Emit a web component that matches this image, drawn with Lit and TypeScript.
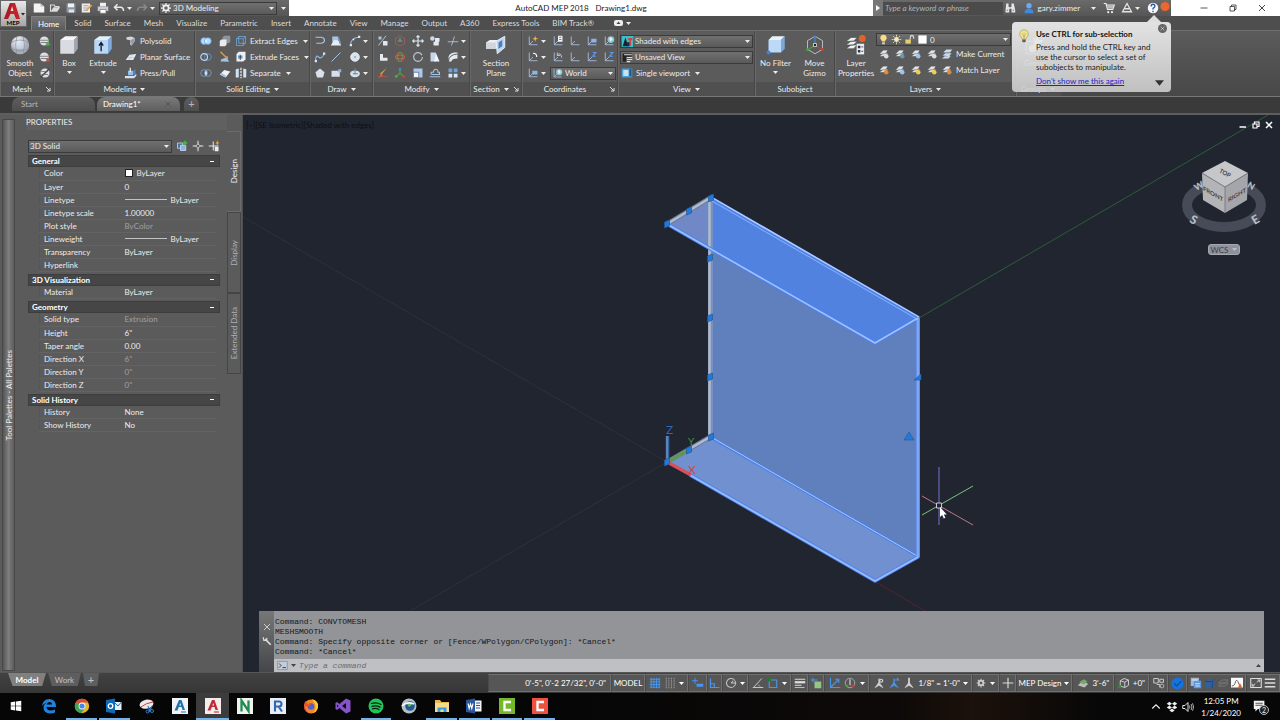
import { LitElement, html, svg, css, nothing } from "lit";
import { customElement, property } from "lit/decorators.js";
import { classMap } from "lit/directives/class-map.js";

const W = "#e8eaee";
const B = "#8fc0ee";
const axes = svg`<path d="M3 2v11h11M3 13l5-5" fill="none" stroke="#9fb6d6" stroke-width="1.3"/>`;
const sheets = (c: string) => svg`<path d="M2 8l5-5h6l-3 5zM2 11l5-4h6l-3 4z" fill="${W}" stroke="#555" stroke-width=".5"/><circle cx="11" cy="11" r="3" fill="${c}"/>`;

/* Glyphs are drawn on a 16 by 16 grid. */
const glyphs: Record<string, unknown> = {
  new: svg`<path d="M1 2h9l5 4v8H1z" fill="#f4f4f4"/><path d="M10 2v4h5" fill="#bbb"/>`,
  open: svg`<path d="M2 13V4h5l1 2h5v2" fill="none" stroke="#ddd" stroke-width="1.5"/><path d="M2 13l4-6h9l-4 6z" fill="#d9dbe0"/>`,
  save: svg`<path d="M2 2h12v12H2z" fill="#8b96a8"/><path d="M4 2h8v5H4z" fill="#f2f2f2"/><path d="M5 10h7v4H5z" fill="#e4e4e4"/>`,
  saveas: svg`<path d="M1 2h11v12H1z" fill="#eee"/><path d="M3 5h7M3 8h6M3 11h6" stroke="#888"/><path d="M6 11l7-8 2 2-7 7z" fill="#e6a54a"/>`,
  print: svg`<path d="M4 1h8v5H4z" fill="#eee"/><path d="M1 6h14v6H1z" fill="#c9ccd2"/><path d="M4 10h8v5H4z" fill="#fff" stroke="#777"/>`,
  undo: svg`<path d="M6 3L2 7l4 4M2 7h8q4 0 4 5" fill="none" stroke="#e8e8e8" stroke-width="2"/>`,
  redo: svg`<path d="M10 3l4 4-4 4M14 7H6q-4 0-4 5" fill="none" stroke="#8a8a8a" stroke-width="2"/>`,
  gear: svg`<circle cx="8" cy="8" r="4.2" fill="none" stroke="#f0f0f0" stroke-width="2.6"/><path d="M8 0v3M8 13v3M0 8h3M13 8h3M2.3 2.3l2 2M11.7 11.7l2 2M13.7 2.3l-2 2M2.3 13.7l2-2" stroke="#f0f0f0" stroke-width="2"/>`,
  gearflat: svg`<circle cx="8" cy="8" r="3.600" fill="none" stroke="#c8c8c8" stroke-width="3"/><path d="M8 1v3M8 12v3M1 8h3M12 8h3M3 3l2 2M11 11l2 2M13 3l-2 2M3 13l2-2" stroke="#c8c8c8" stroke-width="1.700"/>`,
  ball: svg`<defs><radialGradient id="bg" cx=".4" cy=".3"><stop offset="0" stop-color="#fff"/><stop offset="1" stop-color="#a8aeb9"/></radialGradient></defs><circle cx="8" cy="8" r="7.3" fill="url(#bg)"/><path d="M1 6q7-4 14 0M1.500 11q6.500 3 13 0M5.500 1.500q-2 6 0 13M10.500 1.500q2 6 0 13" fill="none" stroke="#8a929e" stroke-width=".6"/><path d="M5 5h6v6H5z" fill="#c9d9ee" opacity=".6"/>`,
  ballplus: svg`<circle cx="7" cy="8" r="6" fill="#dcdfe4"/><path d="M1 7h12M2 10h10" stroke="#666"/><path d="M12 9v6M9 12h6" stroke="#45b03c" stroke-width="2"/>`,
  ballminus: svg`<circle cx="7" cy="8" r="6" fill="#dcdfe4"/><path d="M1 7h12M2 10h10" stroke="#666"/><circle cx="12" cy="12" r="2.500" fill="#cf4848"/>`,
  ballpen: svg`<circle cx="8" cy="8" r="6" fill="#dcdfe4"/><path d="M2 14L14 2" stroke="#444" stroke-width="2"/><path d="M3 6h9M3 10h9" stroke="#666"/>`,
  box: svg`<path d="M1 4l4-3h10l-3 3z" fill="#f6f6f8"/><path d="M1 4h11v11H1z" fill="#d9dbe0"/><path d="M12 4l3-3v10l-3 4z" fill="#a2a6b0"/>`,
  extrude: svg`<path d="M1 4l4-3h10l-3 3z" fill="#e2effc"/><path d="M1 4h11v11H1z" fill="#bad7f5"/><path d="M12 4l3-3v10l-3 4z" fill="#7fabdc"/><path d="M6.500 13V7M4.800 8.500L6.500 6l1.700 2.500" stroke="#182030" stroke-width="1.100" fill="none"/>`,
  polysolid: svg`<path d="M2 3l6-1 5 2v4L9 14l-2-1V7L2 6z" fill="#d3d6dc"/><path d="M7 7l6-3v4l-4 6z" fill="#979da8"/>`,
  planar: svg`<path d="M1 12l5-7 9-1-4 8z" fill="#e4ebf4"/><path d="M3 9l9 0M10 4l-5 8" stroke="#aab4c2" stroke-width=".7"/>`,
  presspull: svg`<path d="M4 5h7v6H4z" fill="${B}"/><path d="M11 5l3-2v6l-3 2z" fill="#5688bb"/><path d="M0 12h12l3-3v3l-3 3H0z" fill="#dfe2e8"/><path d="M7 1v6" stroke="#fff" stroke-width="1.500"/>`,
  union: svg`<circle cx="5.500" cy="8" r="4.500" fill="#b8dafc" stroke="#5aa0e6"/><circle cx="10.500" cy="8" r="4.500" fill="#b8dafc" stroke="#5aa0e6"/><path d="M8 4.500q2 3.500 0 7-2-3.500 0-7" fill="#fff"/>`,
  subtract: svg`<circle cx="10.500" cy="8" r="4.500" fill="none" stroke="#5aa0e6"/><circle cx="5.500" cy="8" r="4.500" fill="none" stroke="#b8dafc" stroke-width="1.500"/>`,
  intersect: svg`<circle cx="5.500" cy="8" r="4.500" fill="none" stroke="#78a8d8"/><circle cx="10.500" cy="8" r="4.500" fill="none" stroke="#78a8d8"/><path d="M8 4.200q3 3.800 0 7.600-3-3.800 0-7.600" fill="#cfe6ff"/>`,
  boxes: svg`<path d="M5 3l2-2h8v8l-2 2H5z" fill="#8f949c"/><path d="M1 8l2-2h7v7l-2 2H1z" fill="#e9ebee"/>`,
  group: svg`<path d="M1 5h10v10H1z" fill="none" stroke="#eee" stroke-dasharray="1.500 1"/><circle cx="6" cy="11" r="3" fill="#fff"/><path d="M10 0l1 4 4 0-3 3 1 4-3-3-4 1 2-4-2-3 3 1z" fill="#fff"/>`,
  chamf: svg`<path d="M2 1l9 9M11 7v6H7" stroke="#d99b4c" stroke-width="2" fill="none"/><path d="M3 11l6-2 5 5H2z" fill="#9fc2e8"/>`,
  eraserbox: svg`<path d="M1 10l6-6 8 2-6 8z" fill="#f0f2f6"/><path d="M1 10l8 4v-3L3 8z" fill="#9fc2e8"/>`,
  wire: svg`<path d="M2 5h9v9H2zM5 2h9v9H5zM2 5l3-3M11 5l3-3M11 14l3-3" fill="none" stroke="#6cabec"/>`,
  exfaces: svg`<path d="M2 4l3-3h9v10l-3 3H2z" fill="#eef0f4"/><path d="M4 6h6v4H4z" fill="#5d9bd8"/><path d="M7 5v7" stroke="#223"/>`,
  separate: svg`<path d="M1 3l4-1v12H1zM15 3l-4-1v12h4z" fill="#cfe2f8"/><path d="M8 1v14" stroke="#fff" stroke-width="1.500" stroke-dasharray="3 1"/>`,
  poly: svg`<path d="M2 3h8q4 1 4 4t-4 4H3" fill="none" stroke="#a8c4e6" stroke-width="1.500"/>`,
  press: svg`<path d="M3 2h8v7H3z" fill="#a8c4e6"/><path d="M1 14l4-7h6l4 7z" fill="#e8eef6"/><path d="M11 3l3 9" stroke="#6d97c8" stroke-width="2"/>`,
  arc: svg`<path d="M2 14Q2 3 14 3" fill="none" stroke="#8fb4e0" stroke-width="1.400"/><path d="M1 12h3v3H1zM5 5h2v2H5zM12 1h3v3h-3z" fill="#d9e6f6"/>`,
  spline: svg`<path d="M2 14Q2 4 6 8t8-5" fill="none" stroke="#8fb4e0" stroke-width="1.600"/><path d="M1 12h3v3H1zM12 2h3v3h-3z" fill="#d9e6f6"/>`,
  line: svg`<path d="M2 14L14 2" stroke="#a8c4e6" stroke-width="1.300"/>`,
  circle: svg`<circle cx="8" cy="8" r="5.800" fill="#d8e2ee" stroke="#f4f8fc"/><circle cx="8" cy="8" r="1" fill="#56708e"/>`,
  pent: svg`<path d="M8 2l6 5-2 7H4L2 7z" fill="#d8e0ec"/>`,
  rect: svg`<path d="M2 5h11v8H2z" fill="#d8e0ec"/><path d="M11 3h4v4h-4z" fill="#8fb4e0"/>`,
  ellipse: svg`<ellipse cx="8" cy="9" rx="6.500" ry="4.500" fill="#d8e0ec"/><path d="M8 2v8M5 9h7" stroke="#6f87a6" stroke-width="1.500"/>`,
  align: svg`<path d="M2 14L12 1" stroke="#ddd"/><path d="M2 2h4v4H2z" fill="#a8c4e6"/><path d="M8 8h6v6H8z" fill="#dfe6ef"/>`,
  gizmo: svg`<path d="M8 1l6 3.500v7L8 15l-6-3.500v-7z" fill="none" stroke="#b35f57"/><path d="M8 4v5M5 8h6" fill="none" stroke="#7fae6c" stroke-width="1.400"/><circle cx="8" cy="8" r="1.200" fill="#4c84d8"/>`,
  move: svg`<path d="M8 1v14M1 8h14M6 3l2-2 2 2M6 13l2 2 2-2M3 6L1 8l2 2M13 6l2 2-2 2" fill="none" stroke="#dce6f2" stroke-width="1.500"/>`,
  copy: svg`<circle cx="4.500" cy="4.500" r="3" fill="#cfd9e6"/><path d="M8 4h6v5H8zM6 9h7v5H6z" fill="#e3eaf2"/>`,
  trim: svg`<path d="M1 9h14" stroke="#8fb4e0" stroke-width="1.500"/><path d="M6 14L10 2" stroke="#c8d0dc"/>`,
  lshape: svg`<path d="M4 4h4v5h6v4H4z" fill="#e3eaf2"/>`,
  rotgizmo: svg`<circle cx="8" cy="8" r="6" fill="none" stroke="#d04a3c" stroke-width="1.300"/><ellipse cx="8" cy="8" rx="3" ry="6" fill="none" stroke="#5fae50"/><ellipse cx="8" cy="8" rx="6" ry="2.500" fill="none" stroke="#c9794c"/>`,
  rotate: svg`<circle cx="8" cy="8" r="5.800" fill="none" stroke="#b9c6d6" stroke-width="1.600" stroke-dasharray="33 3"/>`,
  mirror: svg`<path d="M2 2h7v12H2z" fill="#c5d7ec"/><path d="M9 2l5 12H7z" fill="#f2f5f9"/>`,
  fillet: svg`<path d="M2 14V8q1-5 8-6h4v8q-8 0-8 4z" fill="#e3eaf2"/><path d="M2 14q0-9 12-10" stroke="#333" fill="none"/>`,
  brush: svg`<path d="M13 1L6 10l-2-1z" fill="#e2b04a"/><path d="M1 13h13M5 9l3 2-5 3z" stroke="#c0563b" fill="#d77c4a"/>`,
  scalegizmo: svg`<path d="M8 8V2M8 8l5 5M8 8l-5 5" stroke="#4d9a42" stroke-width="2"/><circle cx="8" cy="3" r="1.800" fill="#4c84d8"/><circle cx="13" cy="12.500" r="1.800" fill="#cc4436"/><circle cx="3" cy="12.500" r="1.800" fill="#4fae46"/>`,
  scale: svg`<path d="M2 2h12v12H2z" fill="#a9c8ea"/><path d="M2 7h7v7H2z" fill="#f2f6fb" stroke="#4b6a8c"/>`,
  offset: svg`<path d="M1 13h14M4 10q-2 0-1-3h3q0-4 3-4t3 4h2v3z" stroke="#a8c4e6" fill="none" stroke-width="1.400"/>`,
  array: svg`<path d="M2 2h5v5H2zM9 2h5v5H9z" fill="#6fa2da"/><path d="M2 9h5v5H2zM9 9h5v5H9z" fill="#d6e5f6"/>`,
  section: svg`<path d="M0 6l3-2h8v5l-3 2H0z" fill="#eceef1"/><path d="M0 6h8v5H0z" fill="#d2d5da"/><path d="M8 5l7-4v9l-6 5z" fill="#bdd7f2" stroke="#e8f2fc" stroke-width=".7"/><path d="M10 6l3-2v5l-3 2z" fill="#4a7fb8"/>`,
  ucs: svg`${axes}`,
  ucsstar: svg`${axes}<path d="M11 1l1 3 3 1-3 1-1 3-1-3-3-1 3-1z" fill="#f2b03c"/>`,
  ucsrot: svg`${axes}<path d="M8 3q5 0 5 5" stroke="#fff" fill="none" stroke-width="1.500"/>`,
  ucsbox: svg`${axes}<path d="M7 5h7v5H7z" fill="#8fb4e0"/>`,
  ucspage: svg`${axes}<path d="M8 1h6v8H8z" fill="#f5f5f5"/><path d="M9.500 3h3M9.500 6h3" stroke="#555"/>`,
  ucsundo: svg`${axes}<path d="M7 5q5-4 6 4M7 2v4h4" stroke="#ddd" fill="none"/>`,
  ucsworld: svg`${axes}<circle cx="10.500" cy="6" r="4.500" fill="#8fc5cc"/><path d="M8 4l3-1 2 3-3 3z" fill="#e4f2ee"/>`,
  ucsz: svg`${axes}<path d="M9 2h4L9 7h4" stroke="#5b9cf0" fill="none" stroke-width="1.600"/>`,
  style: svg`<path d="M0 0h16v16H0z" fill="#3ac0c8"/><path d="M1 15L5 2l4 13z" fill="#172036"/><path d="M9 3h6v3h-2v8h-2V6H9z" fill="#e03c38"/><path d="M7 9h4v6H7z" fill="#1d2c52"/>`,
  viewpic: svg`<path d="M1 2h13v5H6v7H1z" fill="#222"/><path d="M3 4h11M7 8h8M7 11h8M7 14h5" stroke="#ddd" stroke-width="1.500"/>`,
  viewport: svg`<path d="M1 2h14v12H1z" fill="#4f9fd8"/><path d="M3 4h7v8H3z" fill="#bfe4f8"/><path d="M11 3l3-1v11l-3-1z" fill="#1f5d96"/>`,
  nofilter: svg`<path d="M2 4l3-3h10l-3 3z" fill="#e9f4fe"/><path d="M2 4h10v10H2z" fill="#bcdaf7"/><path d="M12 4l3-3v10l-3 3z" fill="#7da8da"/><circle cx="2" cy="14" r="1.600" fill="#3f83da"/>`,
  movegizmo: svg`<path d="M8 1l6 3.500v7L8 15l-6-3.500v-7z" fill="none" stroke="#c4c7cc" stroke-width=".7"/><path d="M8 8V2" stroke="#4a82d8" stroke-width=".9"/><path d="M8 8l5 3.500" stroke="#c84034" stroke-width=".9"/><path d="M8 8l-5 3.500" stroke="#4ba33f" stroke-width=".9"/><path d="M7 .5h2v2H7z" fill="#4a82d8"/><circle cx="14" cy="11.500" r="1.200" fill="#c84034"/><circle cx="2" cy="11.500" r="1.200" fill="#4ba33f"/><path d="M6.800 6.800h2.400v2.400H6.800z" fill="#222" stroke="#eee" stroke-width=".6"/>`,
  layerprops: svg`<path d="M0 5l4-3h5L6 5zM0 8l4-3h5L6 8zM0 11l4-3h5l-3 3z" fill="#f0f1f3" stroke="#4c4c4c" stroke-width=".5"/><circle cx="13" cy="2.700" r="2.800" fill="#e2622b"/><path d="M8.500 7h6v8.500h-6z" fill="#e9eef6"/><path d="M9.500 8.500h2v2h-2zM9.500 12h2v2h-2z" fill="#333"/><path d="M12.300 9.500h1.500M12.300 13h1.500" stroke="#333" stroke-width=".7"/>`,
  bulb: svg`<path d="M8 1a4.500 4.500 0 0 1 3 8l-1 2H6L5 9a4.500 4.500 0 0 1 3-8z" fill="#f8dd82"/><path d="M6 12h4v3H6z" fill="#d3d0c0"/>`,
  tipbulb: svg`<path d="M8 .8a5 5 0 0 1 3 9l-1 2H6l-1-2a5 5 0 0 1 3-9z" fill="#ece08f" stroke="#9c9050" stroke-width=".6"/><path d="M6.500 5q1.500 3 1.500 6 0-3 1.500-6" fill="none" stroke="#a89a50" stroke-width=".6"/><path d="M6 12h4v2.500L8 15.500l-2-1z" fill="#5d6068"/>`,
  sun: svg`<circle cx="8" cy="8" r="3.500" fill="#f6ecc0"/><path d="M8 1v3M8 12v3M1 8h3M12 8h3M3 3l2 2M11 11l2 2M13 3l-2 2M3 13l2-2" stroke="#e5d9a8" stroke-width="1.300"/>`,
  lock: svg`<path d="M2 8h8v6H2z" fill="#e5cf6a"/><path d="M9 8V5q0-3 2.500-3T14 5v2" fill="none" stroke="#e4e4e4" stroke-width="1.500"/>`,
  swatch: svg`<path d="M2 2h12v12H2z" fill="#fff"/>`,
  lblue: sheets("#9fc4ee"), lyel: sheets("#f0cc4a"), lwhite: sheets("#d9dde4"), lorange: sheets("#dd8a3a"), lgreen: sheets("#6d94a8"),
  lhigh: svg`<path d="M3 6l4-4h8l-3 4zM2 10l4-3h8l-3 4zM1 14l4-3h8l-3 3z" fill="#c7daf0"/>`,
  binoc: svg`<path d="M3 2h3v4l1 1h2l1-1V2h3l2 9v3h-5V9H7v5H2v-3z" fill="#e4e6ea"/><path d="M3.500 11h2M11.500 11h2" stroke="#555"/>`,
  user: svg`<circle cx="8" cy="5" r="3.600" fill="#6aaaf4"/><path d="M2 15q0-6 6-6t6 6z" fill="#3f88e4"/>`,
  cart: svg`<path d="M1 2h3l2 8h7l2-6H5" fill="none" stroke="#eee" stroke-width="1.600"/><path d="M5 4h9l-1 5H6z" fill="#bbb"/><circle cx="7" cy="13.500" r="1.400" fill="#eee"/><circle cx="12" cy="13.500" r="1.400" fill="#eee"/>`,
  autodesk: svg`<path d="M8 2L2 13h12zM4 9h8" fill="none" stroke="#e4e4e4" stroke-width="1.700"/>`,
  help: svg`<circle cx="8" cy="8" r="7" fill="#f6f8fb"/><path d="M5.500 6q0-3 2.500-3t2.500 2.500Q10.500 7 8 8.500V10M8 11.500v2" fill="none" stroke="#2b5fa8" stroke-width="1.800"/>`,
  alert: svg`<circle cx="8" cy="6" r="6" fill="#e86830"/>`,
  qselect: svg`<path d="M2 4h7v7H2z" fill="#3f74a8" stroke="#cfe0f2"/><path d="M6 7h7v7H6z" fill="#8fb4dc" stroke="#cfe0f2"/><path d="M12 1v6M9 4h6" stroke="#3fbf3a" stroke-width="2"/>`,
  pick: svg`<path d="M8 1v14M1 8h14" stroke="#eee" stroke-width="1.300"/><path d="M8 5l3 3-3 3-3-3z" fill="#5a5a5a" stroke="#eee"/>`,
  pickbolt: svg`<path d="M7 2v12M1 8h13" stroke="#eee" stroke-width="1.300"/><path d="M9 9h5v6H9z" fill="#eee"/><path d="M13 0l-3 5h2l-1 4 4-6h-2z" fill="#e8a33b"/>`,
  grid: svg`<path d="M3 1v14M6.500 1v14M10 1v14M13.500 1v14M1 3h14M1 6.500h14M1 10h14M1 13.500h14" stroke="#4795ee" stroke-width="1.300"/>`,
  snap: svg`<path d="M3 1v14M6.500 1v14M10 1v14M13.500 1v14" stroke="#aaa" stroke-width="1.200" stroke-dasharray="1.500 1"/>`,
  dyn: svg`<path d="M4 1v8M0 5h8" stroke="#4795ee" stroke-width="1.300"/><path d="M6 9h9v4H6z" fill="#4795ee"/>`,
  ortho: svg`<path d="M2 2v12h12M2 9h5v5" fill="none" stroke="#4795ee" stroke-width="1.600"/>`,
  polar: svg`<circle cx="8" cy="8" r="6" fill="none" stroke="#c4c4c4" stroke-width="1.400"/><path d="M8 8h7M8 8l3-3" stroke="#c4c4c4" stroke-width="1.400"/>`,
  iso: svg`<path d="M1 14h14M2 14L13 2" stroke="#c8c8c8" stroke-width="1.300" fill="none"/><path d="M8 10l3 3" stroke="#c8c8c8"/>`,
  osnap: svg`<path d="M3 4h10v10H3z" fill="none" stroke="#4795ee" stroke-width="1.500"/><path d="M0 1h5v5H0z" fill="#1f7c2e"/>`,
  lwt: svg`<path d="M1 3h14M1 11h9" stroke="#ddd" stroke-width="1.300"/><path d="M1 7h14" stroke="#ddd" stroke-width="3"/><path d="M1 14h13" stroke="#ddd"/>`,
  cycle: svg`<path d="M6 6h9v9H6z" fill="#94c584"/><path d="M4 1v6M1 4h9" stroke="#4795ee" stroke-width="1.500"/>`,
  ducs: svg`<path d="M2 1v13h13M2 14L12 4M8 3h5v5" fill="none" stroke="#4795ee" stroke-width="1.500"/>`,
  giz: svg`<circle cx="8" cy="8" r="6.300" fill="none" stroke="#bbb"/><path d="M8 3v8" stroke="#ddd" stroke-width="1.500"/><circle cx="12" cy="12" r="2" fill="#c84034"/><circle cx="4" cy="12" r="1.700" fill="#4ba33f"/>`,
  anno: svg`<path d="M8 7L3 14l5-3 5 3z" fill="#d0d0d0" stroke="#d0d0d0"/><path d="M8 2v8M11 3a2 2 0 1 1-.1 0" fill="none" stroke="#d0d0d0" stroke-width="1.600"/>`,
  annob: svg`<path d="M8 7L3 14l5-3 5 3z" fill="#4795ee" stroke="#4795ee"/><path d="M8 2v8M8 4h6l-2-3" fill="none" stroke="#4795ee" stroke-width="1.600"/>`,
  annoc: svg`<path d="M8 7L3 14l5-3 5 3z" fill="#d0d0d0" stroke="#d0d0d0"/><path d="M8 1v10" stroke="#d0d0d0" stroke-width="2.400"/>`,
  plus: svg`<path d="M8 1v14M1 8h14" stroke="#ddd" stroke-width="1.500"/>`,
  plane: svg`<path d="M1 11l6-5 8 3-5 5z" fill="#bdbdbd"/><path d="M3 7l6-4 5 3-5 4z" fill="#78a866"/>`,
  cube: svg`<path d="M3 5l5-3 6 2v7l-5 3-6-2zM3 5l6 2 5-3M9 7v7" fill="none" stroke="#ccc" stroke-width="1.300"/><path d="M0 11h4v4H0z" fill="#2d8c37"/>`,
  iso2: svg`<path d="M1 2h6v6H1zM9 3h5v4H9zM5 10h4v4" fill="none" stroke="#ccc" stroke-width="1.300"/><circle cx="12" cy="12" r="2.500" fill="none" stroke="#ccc"/>`,
  check: svg`<circle cx="8" cy="8" r="7.500" fill="#1673dc"/><path d="M4 8l3 3 6-6" stroke="#0a4ea2" fill="none" stroke-width="1.500"/>`,
  pages: svg`<path d="M1 1h11v11H1z" fill="#a9b6c6"/><path d="M5 5h10v10H5z" fill="#5a9ae2"/><path d="M3 4h7M7 9h6M7 12h6" stroke="#fff"/>`,
  dimcube: svg`<path d="M2 6l4-3h8v8l-3 4H2z" fill="#31609c"/><path d="M2 6h9v9M11 6l3-3" stroke="#174073" fill="none"/>`,
  dimsheets: svg`<path d="M2 8l5-4h8l-4 4zM2 12l5-4h8l-4 4z" fill="none" stroke="#777" stroke-width="1.300"/>`,
  graph: svg`<path d="M0 1h16v13H0z" fill="#fafafa"/><path d="M1 12q4 0 5-6 2-4 4 2t4 4" fill="none" stroke="#333"/><path d="M12 8l3 7H9z" fill="#e2622b"/>`,
  full: svg`<path d="M1 2h14v12H1z" fill="none" stroke="#ddd" stroke-width="1.400"/><path d="M9 7l4-3M13 7V4h-3M7 9l-4 3M3 9v3h3" stroke="#ddd" fill="none" stroke-width="1.200"/>`,
  menu: svg`<path d="M1 3h14M1 8h14M1 13h14" stroke="#ddd" stroke-width="2"/>`,
  wrench: svg`<path d="M5 5l9 9" stroke="#ddd" stroke-width="2.600"/><path d="M2 2l1 5h4l1-4" fill="none" stroke="#ddd" stroke-width="2"/>`,
  prompt: svg`<path d="M1 2h14v12H1z" fill="#c2ccdb" stroke="#7b8796"/><path d="M3 5l3 3-3 3M8 11h5" fill="none" stroke="#333" stroke-width="1.300"/>`,
  min: svg`<path d="M1 8h14" stroke="currentColor" stroke-width="1.500"/>`,
  mdimin: svg`<path d="M1 12h13" stroke="#fff" stroke-width="3"/>`,
  mdirestore: svg`<path d="M2 6h8v8H2zM5 5V2h9v9h-3" fill="none" stroke="#fff" stroke-width="2.400"/>`,
  mdiclose: svg`<path d="M2 2l12 12M14 2L2 14" stroke="#fff" stroke-width="3"/>`,
  restore: svg`<path d="M2 5h9v9H2zM5 5V2h9v9h-3" fill="none" stroke="currentColor" stroke-width="1.500"/>`,
  close: svg`<path d="M2 2l12 12M14 2L2 14" stroke="currentColor" stroke-width="1.700"/>`,
  win: svg`<path d="M1 3l6-1v5.600H1zM8 1.900L15 1v6.600H8zM1 8.400h6V14l-6-1zM8 8.400h7V15l-7-.9z" fill="#fff"/>`,
  edge: svg`<path d="M1 8Q2 1 8.500 1 15 1.500 15 9H5.500q.5 3.500 4 3.500 2.500 0 4.500-1V14.500q-2 1-5 1-6.500-.5-6.500-6Q3 6 6 4.500 2.500 5.500 1 8zM5.700 6.500H11Q11 4 8.500 4 6.200 4 5.700 6.500z" fill="#1f82de"/>`,
  chrome: svg`<circle cx="8" cy="8" r="7.200" fill="#e3b82e"/><path d="M8 8L1.700 4.400A7.200 7.200 0 0 1 14.200 4.400H8z" fill="#dc4937"/><path d="M8 8L1.700 4.400A7.200 7.200 0 0 0 7.500 15.200L11 9.500z" fill="#3fa455"/><circle cx="8" cy="8" r="3.400" fill="#fff"/><circle cx="8" cy="8" r="2.600" fill="#4a86e4"/>`,
  outlook: svg`<path d="M8 4h7.500v8H8z" fill="#e6f0fa"/><path d="M8 4l4 4 3.500-4" fill="none" stroke="#1b6cb8"/><path d="M0 2l9-1.500v15L0 14z" fill="#1068b8"/><circle cx="4.500" cy="8" r="2.300" fill="none" stroke="#fff" stroke-width="1.300"/>`,
  snip: svg`<ellipse cx="7.500" cy="6" rx="7" ry="4.500" fill="#f1e6e6" transform="rotate(-12 8 6)"/><path d="M2 9q5-4 12-5" stroke="#b44a4a" fill="none"/><path d="M9 8l2 6M13 8l-3 6" stroke="#3b7ec0" stroke-width="1.200"/><circle cx="8.500" cy="13.500" r="1.500" fill="none" stroke="#3b7ec0"/><circle cx="13" cy="13" r="1.500" fill="none" stroke="#3b7ec0"/>`,
  appblue: svg`<path d="M0 0h16v16H0z" fill="#f0f4f8"/><path d="M2.500 12.500L7 2h2.500l3.500 10h-2.500l-1-3H6.800l-1.300 3.500z" fill="#2372ac"/><path d="M7.300 7.500h1.800L8.300 5z" fill="#f0f4f8"/><path d="M9 14h5" stroke="#4c93c9" stroke-width="1.300"/>`,
  appred: svg`<path d="M0 0h16v16H0z" fill="#f6ecec"/><path d="M2.500 12.500L7 2h2.500l3.500 10h-2.500l-1-3H6.800l-1.300 3.500z" fill="#bb2c34"/><path d="M7.300 7.500h1.800L8.300 5z" fill="#f6ecec"/><path d="M9 14h5" stroke="#c44" stroke-width="1.300"/>`,
  navis: svg`<path d="M0 0h16v16H0z" fill="#eef4ee"/><path d="M4.500 13.500V2.500L11.500 13V2.500" fill="none" stroke="#228a52" stroke-width="2.300"/>`,
  revit: svg`<path d="M0 0h16v16H0z" fill="#e8eef6"/><path d="M5 13.500V3.500h4q2.500 0 2.500 2.500T9 8.500H5M8.500 8.500l3.500 5" fill="none" stroke="#3468ae" stroke-width="2.100"/>`,
  firefox: svg`<circle cx="8" cy="8.500" r="7" fill="#f08a26"/><path d="M9 1q7 2 6 8-1 5-5 6 4-4 2-9z" fill="#f8cc3c"/><path d="M1.200 7Q2 12 6 15q-4-1-5-5z" fill="#d8343e"/><circle cx="8" cy="8.500" r="3.300" fill="#5561c8"/><path d="M2 3l3 3 4-1-4 4-4-1z" fill="#e8542e"/>`,
  vs: svg`<path d="M11 .5l4.500 2v11l-4.500 2L4.500 10 2 12 .5 11V5L2 4l2.500 2z" fill="#8654c8"/><path d="M11 5L7 8l4 3z" fill="#0b0b0b"/><path d="M2 6.500L3.500 8 2 9.500z" fill="#0b0b0b"/>`,
  spotify: svg`<circle cx="8" cy="8" r="7.500" fill="#1fc45a"/><path d="M3.500 5.500q5-1.500 9.500 1M4 8.300q4-1.300 8 .8M4.500 10.800q3.500-1 6.500.7" fill="none" stroke="#0c1c10" stroke-width="1.300" stroke-linecap="round"/>`,
  globe: svg`<circle cx="8" cy="8" r="7.500" fill="#b4bec8"/><circle cx="9" cy="8" r="4.800" fill="#235a8c"/><path d="M6 6l4-2 1 3-3 2z" fill="#6db06a"/><path d="M1 8q5-5 12-2" stroke="#f2f6fa" stroke-width="1.500" fill="none"/>`,
  folder: svg`<path d="M1 2h5l1.500 2H15v10H1z" fill="#e8b84a"/><path d="M1 5h14v9H1z" fill="#f8dc8c"/><path d="M3.500 14V9.500h9V14h-3v-2.500h-3V14z" fill="#3f9bd8"/>`,
  word: svg`<path d="M7 2.500h8.500v11H7z" fill="#f4f6fa"/><path d="M10 5h4M10 7.500h4M10 10h4" stroke="#2b579a"/><path d="M0 2l9-1.500v15L0 14z" fill="#2a569c"/><path d="M2 5.500l1.200 5 1.300-4.500 1.300 4.500 1.200-5" fill="none" stroke="#fff" stroke-width="1.100"/>`,
  camgreen: svg`<path d="M0 0h16v16H0z" fill="#76b82a"/><path d="M12 4H5.500v8H12" fill="none" stroke="#fff" stroke-width="2.300"/>`,
  camred: svg`<path d="M0 0h16v16H0z" fill="#ee5140"/><path d="M12 4H5.500v8H12" fill="none" stroke="#fff" stroke-width="2.300"/>`,
  chevup: svg`<path d="M3 10l5-5 5 5" fill="none" stroke="#eee" stroke-width="1.500"/>`,
  dropbox: svg`<path d="M4.500 1L8 3.500 4.500 6 1 3.500zM11.500 1L15 3.500 11.500 6 8 3.500zM4.500 6L8 8.500 4.500 11 1 8.500zM11.500 6L15 8.500 11.500 11 8 8.500zM8 10l3.500 2.500L8 15l-3.500-2.500z" fill="#eee"/>`,
  sound: svg`<path d="M1 6h3l4-4v12l-4-4H1z" fill="none" stroke="#eee" stroke-width="1.300"/><path d="M10 6q1 2 0 4M12 4q2.500 4 0 8M14 3q3 5 0 10" fill="none" stroke="#ddd"/>`,
  note: svg`<path d="M1 1h13v10H6l-3 3v-3H1z" fill="#f2f2f2"/><path d="M3 4h9M3 6.500h9" stroke="#333"/>`,
};

const ic = (name: string, size = 12) =>
  html`<svg class="ic" width=${size} height=${size} viewBox="0 0 16 16" aria-hidden="true">${glyphs[name]}</svg>`;
const car = html`<svg class="car" width="5" height="3" viewBox="0 0 5 3" aria-hidden="true"><path d="M0 0h5L2.500 3z" fill="currentColor" /></svg>`;
const ib = (name: string, label: string, caret = false) =>
  html`<button class="ib" aria-label=${label}>${ic(name)}${caret ? car : nothing}</button>`;

const shared = css`
  * { box-sizing: border-box; }
  :host { display: block; color: #ececec; font: 400 8px/10px Lato, "Open Sans", sans-serif; }
  button, select, input { font: inherit; color: inherit; background: none; border: 0; padding: 0; margin: 0; }
  button { display: inline-flex; align-items: center; justify-content: center; white-space: nowrap; }
  select { appearance: none; flex: 1; min-width: 0; outline: none; }
  .ic, .car { display: block; flex: none; }
  .ib { gap: 2px; min-width: 12px; }
  .combo { display: flex; align-items: center; gap: 2px; height: 13px; padding: 0 2px 0 1px; border: 1px solid #3b3b3b; background: linear-gradient(#707070, #5a5a5a); }
`;

@customElement("cad-titlebar")
class CadTitlebar extends LitElement {
  static styles = [shared, css`
    .bar { display: flex; height: 16px; background: #fff; }
    .quick { display: flex; align-items: center; gap: 4px; width: 262px; padding: 0 3px 0 6px; background: linear-gradient(#6a6a6a, #565656); }
    .quick .combo { flex: 1; }
    .title { flex: 1; margin: 0; display: flex; align-items: center; justify-content: center; gap: 7px; color: #222; font: inherit; white-space: pre; }
    .info { display: flex; align-items: center; width: 298px; background: linear-gradient(#6a6a6a, #565656); }
    .next { width: 10px; height: 16px; background: #777; }
    .find { width: 120px; height: 13px; padding: 0 2px; background: #4b4b4b; font-style: italic; }
    .find::placeholder { color: #b4b4b4; opacity: 1; }
    .tools { flex: 1; display: flex; align-items: center; justify-content: space-between; padding-left: 1px; }
    .user { gap: 3px; }
    .user .car { margin-left: 8px; }
    .win { width: 109px; display: flex; align-items: center; justify-content: space-around; color: #222; padding: 0 3px 0 18px; }
  `];
  render() {
    return html`<div class="bar">
      <div class="quick">
        ${ib("new", "New")}${ib("open", "Open")}${ib("save", "Save")}${ib("saveas", "Save As")}${ib("print", "Plot")}
        ${ib("undo", "Undo", true)}${ib("redo", "Redo", true)}
        <div class="combo">${ic("gear", 10)}<select aria-label="Workspace"><option>3D Modeling</option></select>${car}</div>
        <button aria-label="Customize">${car}</button>
      </div>
      <h1 class="title"><span>AutoCAD MEP 2018</span><span>Drawing1.dwg</span></h1>
      <div class="info">
        <button class="next" aria-label="Expand"><svg width="4" height="6"><path d="M0 0l4 3-4 3z" fill="#fff" /></svg></button>
        <input class="find" aria-label="Search" placeholder="Type a keyword or phrase" />
        <div class="tools">
          ${ib("binoc", "Search")}
          <button class="user">${ic("user")}gary.zimmer${car}</button>
          ${ib("cart", "App Store")}${ib("autodesk", "A360", true)}
          <button aria-label="Help">${ic("help")}${ic("alert")}</button>
        </div>
      </div>
      <div class="win">
        <button aria-label="Minimize">${ic("min", 8)}</button><button aria-label="Restore">${ic("restore", 8)}</button><button aria-label="Close">${ic("close", 8)}</button>
      </div>
    </div>`;
  }
}

@customElement("cad-ribbon")
class CadRibbon extends LitElement {
  static styles = [shared, css`
    .ribbon { display: flex; height: 67px; background: #5b5b5b; border-bottom: 1px solid #777; border-top: 1px solid #6d6d6d; }
    .panel { display: flex; flex-direction: column; flex: none; border-right: 1px solid #484848; border-left: 1px solid #686868; }
    .body { flex: 1; display: flex; padding-top: 2px; }
    .name { height: 14px; display: flex; align-items: center; justify-content: center; gap: 4px; background: #505050; position: relative; }
    .name.cornered { padding-right: 10px; }
    .corner { position: absolute; right: 2px; top: 5px; }
    .rest { flex: 1; background: linear-gradient(#5b5b5b, #484848); }
    .big { flex-direction: column; justify-content: flex-start; gap: 3px; padding-top: 2px; }
    .icons { display: grid; grid-auto-rows: 16px; align-items: center; justify-items: center; }
    .rows { display: grid; grid-auto-rows: 16px; align-content: start; }
    .cmd { justify-content: flex-start; gap: 3px; }
    .cmd .car { margin-left: 2px; }
    .mesh { width: 54px; } .mesh .big { width: 38px; } .mesh .icons { width: 11px; }
    .modeling { width: 141px; } .modeling .big { width: 28px; } .modeling .big + .big { width: 40px; } .modeling .rows { padding-left: 2px; }
    .editing { width: 115px; } .editing .icons { width: 39px; grid-template-columns: 1fr 1fr; }
    .draw { width: 63px; } .draw .icons { flex: 1; grid-template-columns: 17px 16px 1fr; }
    .modify { width: 97px; } .modify .icons { flex: 1; grid-template-columns: 17px 18px 17px 18px 1fr; }
    .section { width: 52px; } .section .big { flex: 1; }
    .coord { width: 96px; } .coord .icons { flex: 1; grid-template-columns: 26px 1fr 1fr 1fr 1fr; }
    .coord .combo { grid-column: span 4; width: 66px; }
    .view { width: 137px; } .view .rows { flex: 1; align-items: center; padding: 0 1px; }
    .view .cmd { padding-left: 1px; }
    .sub { width: 80px; } .sub .big { flex: 1; }
    .layers { width: 181px; } .layers .big { width: 40px; }
    .lay { flex: 1; } .lay .combo { margin-right: 4px; }
    .grid { display: grid; grid-auto-rows: 16px; grid-template-columns: 16px 16px 16px 16px 1fr; align-items: center; }
    .grid .cmd { padding-left: 1px; gap: 3px; }
    .groups { width: 46px; } .groups .big { width: 36px; }
    .groups .name { padding-right: 2px; }
  `];
  panel(cls: string, name: string, body: unknown, caret = true, corner = false) {
    return html`<section class="panel ${cls}"><div class="body">${body}</div>
      <div class=${classMap({ name: true, cornered: corner })}>${name}${caret ? car : nothing}${corner
        ? html`<svg class="corner" width="5" height="5" aria-hidden="true"><path d="M0 0l4 4M4 1v3H1" stroke="#ddd" fill="none" /></svg>` : nothing}</div></section>`;
  }
  big(icon: string, a: string, b: string, size = 20, caret = false) {
    return html`<button class="big">${ic(icon, size)}<span>${a}${b ? html`<br />${b}` : nothing}</span>${caret ? car : nothing}</button>`;
  }
  cmd(icon: string, label: string, caret = false) {
    return html`<button class="cmd">${ic(icon)}${label}${caret ? car : nothing}</button>`;
  }
  render() {
    return html`<div class="ribbon">
      ${this.panel("mesh", "Mesh", html`${this.big("ball", "Smooth", "Object")}
        <div class="icons">${ib("ballplus", "Smooth More")}${ib("ballminus", "Smooth Less")}${ib("ballpen", "Refine Mesh")}</div>`, false, true)}
      ${this.panel("modeling", "Modeling", html`${this.big("box", "Box", "", 20, true)}${this.big("extrude", "Extrude", "", 20, true)}
        <div class="rows">${this.cmd("polysolid", "Polysolid")}${this.cmd("planar", "Planar Surface")}${this.cmd("presspull", "Press/Pull")}</div>`)}
      ${this.panel("editing", "Solid Editing", html`<div class="icons">${ib("union", "Union")}${ib("boxes", "Interfere")}${ib("subtract", "Subtract")}${ib("chamf", "Slice")}${ib("intersect", "Intersect")}${ib("eraserbox", "Thicken")}</div>
        <div class="rows">${this.cmd("wire", "Extract Edges", true)}${this.cmd("exfaces", "Extrude Faces", true)}${this.cmd("separate", "Separate", true)}</div>`)}
      ${this.panel("draw", "Draw", html`<div class="icons">${ib("poly", "Polyline")}${ib("press", "3D Polyline")}${ib("arc", "Arc", true)}${ib("spline", "Spline")}${ib("line", "Line")}${ib("circle", "Circle", true)}${ib("pent", "Polygon")}${ib("rect", "Rectangle")}${ib("ellipse", "Ellipse", true)}</div>`)}
      ${this.panel("modify", "Modify", html`<div class="icons">
        ${ib("align", "3D Align")}${ib("gizmo", "3D Move")}${ib("move", "Move")}${ib("copy", "Copy")}${ib("trim", "Trim", true)}
        ${ib("lshape", "3D Mirror")}${ib("rotgizmo", "3D Rotate")}${ib("rotate", "Rotate")}${ib("mirror", "Mirror")}${ib("fillet", "Fillet", true)}
        ${ib("brush", "Erase")}${ib("scalegizmo", "3D Scale")}${ib("scale", "Scale")}${ib("offset", "Offset")}${ib("array", "Array", true)}</div>`)}
      ${this.panel("section", "Section", this.big("section", "Section", "Plane"), true, true)}
      ${this.panel("coord", "Coordinates", html`<div class="icons">
        ${ib("ucsstar", "UCS", true)}${ib("ucspage", "Named UCS")}${ib("ucs", "Origin")}${ib("ucsbox", "View")}${ib("ucsworld", "World")}
        ${ib("ucsrot", "Rotate UCS", true)}${ib("ucsundo", "Previous")}${ib("ucs", "Face")}${ib("ucsz", "Z Axis")}${ib("ucsz", "3 Point")}
        ${ib("ucsbox", "Object", true)}<div class="combo">${ic("ucsworld", 11)}<select aria-label="UCS"><option>World</option></select>${car}</div></div>`, false, true)}
      ${this.panel("view", "View", html`<div class="rows">
        <div class="combo">${ic("style", 11)}<select aria-label="Visual style"><option>Shaded with edges</option></select>${car}</div>
        <div class="combo">${ic("viewpic", 11)}<select aria-label="Named view"><option>Unsaved View</option></select>${car}</div>
        ${this.cmd("viewport", "Single viewport", true)}</div>`)}
      ${this.panel("sub", "Subobject", html`${this.big("nofilter", "No Filter", "", 20, true)}${this.big("movegizmo", "Move", "Gizmo")}`, false)}
      ${this.panel("layers", "Layers", html`${this.big("layerprops", "Layer", "Properties")}
        <div class="lay"><div class="combo">${ic("bulb", 11)}${ic("sun", 11)}${ic("lock", 11)}${ic("swatch", 11)}<select aria-label="Layer"><option>0</option></select>${car}</div>
        <div class="grid">${ib("lwhite", "Off")}${ib("lgreen", "Isolate")}${ib("lblue", "Freeze")}${ib("lwhite", "Lock")}${this.cmd("lhigh", "Make Current")}
        ${ib("lorange", "On")}${ib("lblue", "Unisolate")}${ib("lyel", "Thaw")}${ib("lyel", "Unlock")}${this.cmd("lorange", "Match Layer")}</div></div>`)}
      ${this.panel("groups", "Groups", this.big("group", "Group", ""))}
      <div class="rest"></div>
    </div>`;
  }
}

type Row = [string, string, ("dim" | "color" | "line")?];

@customElement("cad-properties")
class CadProperties extends LitElement {
  static groups: [string, Row[]][] = [
    ["General", [["Color", "ByLayer", "color"], ["Layer", "0"], ["Linetype", "ByLayer", "line"], ["Linetype scale", "1.00000"], ["Plot style", "ByColor", "dim"], ["Lineweight", "ByLayer", "line"], ["Transparency", "ByLayer"], ["Hyperlink", ""]]],
    ["3D Visualization", [["Material", "ByLayer"]]],
    ["Geometry", [["Solid type", "Extrusion", "dim"], ["Height", '6"'], ["Taper angle", "0.00"], ["Direction X", '6"', "dim"], ["Direction Y", '0"', "dim"], ["Direction Z", '0"', "dim"]]],
    ["Solid History", [["History", "None"], ["Show History", "No"]]],
  ];
  static styles = [shared, css`
    :host { display: flex; background: #5b5b5b; border-right: 1px solid #4e4e4e; }
    .strip { width: 13px; margin: 4px 0 1px 2px; display: flex; align-items: center; justify-content: center; background: linear-gradient(90deg, #555, #7e7e7e, #5c5c5c); border: 1px solid #484848; }
    .vert { writing-mode: vertical-rl; transform: rotate(180deg); }
    .main { flex: 1; padding: 0 7px 0 13px; }
    .head { margin: 0 -7px 0 -2px; height: 15px; font: inherit; line-height: 15px; background: #606060; }
    .pick { display: flex; align-items: center; gap: 4px; height: 18px; margin-top: 7px; }
    .pick .combo { flex: 1; }
    .group { margin-bottom: 2px; }
    .bar { display: flex; align-items: center; justify-content: space-between; width: 100%; height: 12px; padding: 0 5px 0 3px; background: #464646; border: 1px solid #3d3d3d; font-weight: 700; color: #fff; }
    .dash { width: 4px; height: 1px; background: #fff; }
    table { border-collapse: collapse; table-layout: fixed; width: calc(100% - 15px); margin-left: 11px; border-left: 1px solid #555; }
    tr { height: 13px; }
    th { width: 84px; text-align: left; font-weight: 400; padding: 0 0 0 4px; }
    td { padding: 0 1px; }
    th, td { border-bottom: 1px solid #636363; white-space: nowrap; }
    .val { display: flex; align-items: center; gap: 4px; }
    .dim { color: #a0a0a0; }
    .chip { width: 6px; height: 6px; background: #fff; border: 1px solid #222; box-sizing: content-box; }
    .rule { width: 42px; height: 1px; background: #c4c4c4; }
    .tabs { width: 15px; padding-top: 16px; display: flex; flex-direction: column; }
    .tab { height: 81px; width: 14px; color: #b0b0b0; border: 1px solid #454545; }
    .tab.on { color: #eee; border-left: 0; border-color: #6c6c6c; }
  `];
  render() {
    return html`<div class="strip"><span class="vert">Tool Palettes - All Palettes</span></div>
      <div class="main">
        <h2 class="head">PROPERTIES</h2>
        <div class="pick"><div class="combo"><select aria-label="Selected object"><option>3D Solid</option></select>${car}</div>
          ${ib("qselect", "Toggle PICKADD")}${ib("pick", "Select Objects")}${ib("pickbolt", "Quick Select")}</div>
        ${CadProperties.groups.map(([name, rows]) => html`<div class="group">
          <button class="bar">${name}<span class="dash"></span></button>
          <table>${rows.map(([k, v, kind]) => html`<tr><th scope="row">${k}</th><td><div class=${classMap({ val: true, dim: kind === "dim" })}>
            ${kind === "color" ? html`<span class="chip"></span>` : nothing}${kind === "line" ? html`<span class="rule"></span>` : nothing}${v}</div></td></tr>`)}</table>
        </div>`)}
      </div>
      <div class="tabs">${["Design", "Display", "Extended Data"].map((t, i) => html`<button class=${classMap({ tab: true, on: i === 0 })}><span class="vert">${t}</span></button>`)}</div>`;
  }
}

@customElement("cad-viewport")
class CadViewport extends LitElement {
  static styles = [shared, css`
    :host { display: block; position: relative; overflow: hidden; background: #212530; }
    .scene { position: absolute; inset: 0; width: 100%; height: 100%; }
    .label { position: absolute; left: 3px; top: 5px; color: #0d0f14; }
    .mdi { position: absolute; right: 7px; top: 6px; display: flex; gap: 5px; color: #fff; }
    .nav { position: absolute; right: 9px; top: 40px; }
    .wcs { position: absolute; right: 40px; top: 129px; width: 32px; height: 11px; border-radius: 3px; background: #8f929a; color: #3c4048; border: 1px solid #a5a8b0; gap: 4px; }
    .wcs .car { color: #b9bcc4; }
    .command { position: absolute; left: 16px; right: 16px; bottom: 0; height: 61px; display: flex; }
    .grip { width: 15px; display: flex; flex-direction: column; align-items: center; gap: 5px; padding-top: 3px; background: linear-gradient(#777, #44464a); color: #ddd; }
    .dots { width: 12px; height: 4px; background: radial-gradient(circle, #bbb 40%, transparent 50%) 0 0 / 2px 2px; }
    .pane { flex: 1; display: flex; flex-direction: column; background: #929498; }
    .log { flex: 1; padding: 6px 1px 0; margin: 0; font: 8px/10px "Liberation Mono", monospace; color: #15171a; }
    .entry { height: 13px; display: flex; align-items: center; gap: 3px; padding: 0 3px; background: #bfc0c4; color: #444; }
    .entry input { flex: 1; font: italic 8px/10px "Liberation Mono", monospace; outline: none; }
    .entry input::placeholder { color: #6c6d70; opacity: 1; }
    .up { transform: rotate(180deg); }
  `];
  grips = [[711, 198], [689, 211], [667, 224], [710, 258], [710, 318], [710, 377], [711, 437], [689, 450], [667, 462]];
  render() {
    return html`
      <svg class="scene" viewBox="243 115 1037 557" preserveAspectRatio="xMidYMid slice" role="img" aria-label="Extruded channel">
        <path d="M243 217L667 462L410 611" fill="none" stroke="#323741" stroke-width=".7" />
        <path d="M919 318L1268 115" stroke="#2f6b3c" stroke-width=".8" />
        <path d="M876 582L925 611" stroke="#5c2430" stroke-width=".8" />
        <path d="M710 198L919 318V557L710 437z" fill="#6080bd" />
        <path d="M667 462L710 437L919 557L875 582z" fill="#7190d0" />
        <path d="M667 224L710 198V248z" fill="#7089c6" />
        <path d="M710 198L919 318L875 343L710 248z" fill="#5282e0" />
        <path d="M710 437L919 557" stroke="#4a82ee" stroke-width="2.600" /><path d="M711 437L919 557" stroke="#a9c6fb" stroke-width="1" />
        <path d="M667 224L710 198M667 462L710 437M710.500 198V437" fill="none" stroke="#6f7c96" stroke-width="4.600" />
        <path d="M667 224L710 198M667 462L710 437M709.500 198V437" fill="none" stroke="#aebbd4" stroke-width="2.600" />
        <path d="M712 198V437" stroke="#87a5e4" stroke-width="1" />
        <path d="M711 198L918 317.500V557L875 581L690 475M918 318L875 343L667 224" fill="none" stroke="#4a82ee" stroke-width="3.600" stroke-linejoin="round" />
        <path d="M918 318V557" stroke="#7fa6f5" stroke-width="3" />
        <path d="M711 197L919 317" stroke="#b4ccfb" stroke-width="1.400" /><path d="M712 201L917 319" stroke="#8db1f7" stroke-width="1" />
        <path d="M918 557L875 581L690 475" fill="none" stroke="#9bbcfb" stroke-width="1.800" />
        <path d="M918 318L875 343L667 224" fill="none" stroke="#9fc0fc" stroke-width="1.600" />
        <path d="M667.500 462V436" stroke="#3a65a4" stroke-width="3.500" /><path d="M667 460V436" stroke="#7fa3d8" stroke-width="1" />
        <path d="M669 461L687 451" stroke="#5f9650" stroke-width="3.200" /><path d="M669 463L691 475" stroke="#d8515a" stroke-width="3.200" />
        <text x="666" y="434" font-size="12" fill="#2f66b0">Z</text><text x="688" y="445" font-size="10" fill="#3f9a3c">Y</text><text x="688" y="474" font-size="12" fill="#d2404a">X</text>
        ${this.grips.map(([x, y]) => svg`<path d="M${x - 2.5} ${y - 2}l5-2v6l-5 2z" fill="#1f7ae0" stroke="#28568f" stroke-width=".7"/>`)}
        <path d="M914 380l7-6v6zM904 440l5-8 5 8z" fill="#1f7ae0" stroke="#28568f" stroke-width=".6" />
        <path d="M939 467V525" stroke="#6c64b4" stroke-width="1.200" /><path d="M922 515L973 486" stroke="#7cc282" stroke-width="1" /><path d="M922 496L973 525" stroke="#c07884" stroke-width="1" />
        <path d="M936.500 503h5v5h-5z" fill="#212530" stroke="#ccc" /><path d="M940 507v10l2.200-2 1.600 3.500 1.600-.8-1.600-3.200h3z" fill="#fff" />
      </svg>
      <span class="label">[−][SE Isometric][Shaded with edges]</span>
      <div class="mdi"><button aria-label="Minimize drawing">${ic("mdimin", 8)}</button><button aria-label="Restore drawing">${ic("mdirestore", 8)}</button><button aria-label="Close drawing">${ic("mdiclose", 8)}</button></div>
      <svg class="nav" width="92" height="80" viewBox="1179 155 92 80" role="img" aria-label="View cube">
        <ellipse cx="1224" cy="205" rx="37" ry="22" fill="none" stroke="#464b57" stroke-width="10" />
        <g font-weight="900" font-size="12" fill="#b9bcc2" text-anchor="middle">
          <text x="1194" y="224" transform="rotate(30 1194 219)">S</text><text x="1255" y="224" transform="rotate(-30 1255 219)">E</text>
          <text x="1199" y="189" font-size="9" transform="rotate(-30 1199 186)">W</text><text x="1251" y="189" font-size="9" transform="rotate(30 1251 186)">N</text></g>
        <path d="M1225 161L1248 173L1225 187L1202 173z" fill="#c6c7ca" /><path d="M1202 173L1225 187V213L1203 200z" fill="#b3b4b8" /><path d="M1248 173L1225 187V213L1247 200z" fill="#a5a6ab" />
        <path d="M1202 173L1225 187L1248 173M1225 187V213" fill="none" stroke="#6e7076" stroke-width=".8" />
        <g font-size="7" font-weight="700" fill="#3e4046" text-anchor="middle">
          <text transform="translate(1224 175) rotate(28)" font-size="6">TOP</text><text transform="translate(1213 196) skewY(30)" font-size="6">FRONT</text><text transform="translate(1237 197) skewY(-30)" font-size="6">RIGHT</text></g>
      </svg>
      <button class="wcs">WCS${car}</button>
      <div class="command">
        <div class="grip"><span class="dots"></span><button aria-label="Close command line">${ic("close", 8)}</button><button aria-label="Customize command line">${ic("wrench", 10)}</button></div>
        <div class="pane">
          <pre class="log">Command: CONVTOMESH
MESHSMOOTH
Command: Specify opposite corner or [Fence/WPolygon/CPolygon]: *Cancel*
Command: *Cancel*</pre>
          <div class="entry">${ic("prompt", 11)}${car}<input aria-label="Command" placeholder="Type a command" /><button class="up" aria-label="History">${car}</button></div>
        </div>
      </div>`;
  }
}

@customElement("cad-status")
class CadStatus extends LitElement {
  static styles = [shared, css`
    .row { display: flex; justify-content: space-between; height: 21px; background: linear-gradient(#424242, #363636); border-top: 1px solid #555; }
    .tabs { display: flex; align-items: flex-start; gap: 2px; padding-left: 8px; }
    .tab { height: 13px; width: 38px; background: #5e5e5e; color: #c4c4c4; clip-path: polygon(0 0, 100% 0, 90% 100%, 12% 100%); }
    .tab.on { background: #808080; color: #fff; font-weight: 700; }
    .tab.work { width: 33px; } .tab.add { width: 16px; font-size: 11px; }
    .segs { display: flex; align-items: center; color: #fff; }
    .seg { display: flex; align-items: center; justify-content: space-evenly; height: 18px; background: #565656; border: 1px solid #707070; border-left-color: #4a4a4a; white-space: nowrap; }
    .seg.end { justify-content: flex-end; padding-right: 4px; }
    .words { gap: 3px; }
  `];
  render() {
    const seg = (w: number, body: unknown, end = false) => html`<div class="seg ${end ? "end" : ""}" style="width:${w}px">${body}</div>`;
    const c = (l: string) => html`<button aria-label=${l}>${car}</button>`;
    return html`<div class="row">
      <div class="tabs"><button class="tab on">Model</button><button class="tab work">Work</button><button class="tab add" aria-label="New layout">+</button></div>
      <div class="segs">
        ${seg(123, `0'-5", 0'-2 27/32", 0'-0"`, true)}${seg(34, html`<button>MODEL</button>`)}
        ${seg(43, html`${ib("grid", "Grid")}${ib("snap", "Snap")}${c("Snap options")}`)}${seg(19, ib("dyn", "Dynamic Input"))}${seg(15, ib("ortho", "Ortho"))}
        ${seg(26, html`${ib("polar", "Polar")}${c("Polar options")}`)}${seg(43, html`${ib("iso", "Tracking")}${ib("osnap", "Object Snap")}${c("Snap modes")}`)}
        ${seg(17, ib("lwt", "Lineweight"))}${seg(16, ib("cycle", "Selection Cycling"))}${seg(45, html`${ib("ducs", "Dynamic UCS")}${ib("giz", "Gizmo")}${c("Gizmo options")}`)}
        ${seg(103, html`${ib("anno", "Annotation Visibility")}${ib("annob", "AutoScale")}${ib("annoc", "Annotation Scale")}<button class="words">1/8" = 1'-0"${car}</button>`)}
        ${seg(27, html`<button aria-label="Workspace">${ic("gearflat", 10)}</button>${c("Workspaces")}`)}${seg(17, ib("plus", "Annotation Monitor"))}${seg(56, html`<button class="words">MEP Design${car}</button>`)}
        ${seg(42, html`${ib("plane", "Cut Plane")}<span>3'-6"</span>`)}${seg(35, html`${ib("cube", "Elevation")}<span>+0"</span>`)}${seg(19, ib("iso2", "Isolate"))}
        ${seg(19, html`<button aria-label="Hardware">${ic("check", 13)}</button>`)}${seg(59, html`${ib("pages", "Sheets")}${ib("dimcube", "Model")}${ib("dimsheets", "Layers")}${ib("graph", "Performance")}`)}
        ${seg(34, html`${ib("full", "Clean Screen")}${ib("menu", "Customization")}`)}
      </div></div>`;
  }
}

@customElement("desk-taskbar")
class DeskTaskbar extends LitElement {
  static apps: [string, string, boolean?][] = [["win", "Start"], ["edge", "Edge"], ["chrome", "Chrome", true], ["outlook", "Outlook", true], ["snip", "Snipping Tool"], ["appblue", "AutoCAD"], ["appred", "AutoCAD MEP", true], ["navis", "Navisworks"], ["revit", "Revit"], ["firefox", "Firefox"], ["vs", "Visual Studio"], ["spotify", "Spotify", true], ["globe", "Earth"], ["folder", "File Explorer", true], ["word", "Word", true], ["camgreen", "Camtasia", true], ["camred", "Camtasia Recorder", true]];
  static styles = [shared, css`
    .bar { display: flex; justify-content: space-between; height: 27px; background: linear-gradient(90deg, #060606 0 45%, #0d0908 70%, #1c110b 76%, #070707 86%); }
    .apps { width: 556px; display: grid; grid-template-columns: repeat(17, 1fr); }
    .app { border-bottom: 2px solid transparent; }
    .app.run { border-image: linear-gradient(90deg, transparent 10%, #74b2ee 10% 90%, transparent 90%) 2; }
    .app.on { background: #3c3c3c; border-image: linear-gradient(#74b2ee, #74b2ee) 2; }
    .tray { display: flex; align-items: center; gap: 4px; padding-right: 14px; }
    .clock { text-align: center; line-height: 12px; margin: 0 8px 0 3px; color: #fff; }
    .note { position: relative; }
    .badge { position: absolute; left: 6px; top: 5px; width: 10px; height: 10px; border-radius: 50%; border: 1px solid #bbb; background: #222; font-size: 7px; line-height: 8px; text-align: center; }
  `];
  render() {
    return html`<div class="bar">
      <nav class="apps">${DeskTaskbar.apps.map(([g, l, run]) => html`<button class=${classMap({ app: true, run: !!run, on: g === "appred" })} aria-label=${l}>${ic(g, g === "win" ? 12 : 16)}</button>`)}</nav>
      <div class="tray">${ib("chevup", "Hidden icons")}${ib("dropbox", "Dropbox")}${ib("sound", "Volume")}
        <div class="clock">12:05 PM<br />1/24/2020</div>
        <button class="note" aria-label="Notifications">${ic("note", 13)}<span class="badge">2</span></button></div>
    </div>`;
  }
}

@customElement("app-root")
class AppRoot extends LitElement {
  @property() active = "Home";
  menus = ["Home", "Solid", "Surface", "Mesh", "Visualize", "Parametric", "Insert", "Annotate", "View", "Manage", "Output", "A360", "Express Tools", "BIM Track®"];
  static styles = [shared, css`
    :host { display: grid; grid-template-rows: auto auto auto 1fr auto auto; min-height: 100vh; position: relative; background: #3a3a3a; }
    .top { display: grid; grid-template: 16px 14px / 27px 1fr; background: #4e4e4e; }
    .logo { grid-row: span 2; align-self: start; height: 27px; width: 27px; background: linear-gradient(#e8e8e8, #a6a6a6); border: 1px solid #666; }
    .menu { display: flex; padding-left: 4px; }
    .item { padding: 0 6px 0 7px; color: #dcdcdc; }
    .item.on { background: linear-gradient(#747474, #5b5b5b); border: 1px solid #808080; border-bottom: 0; color: #fff; padding: 0 6px; margin-right: 1px; }
    .pill { margin-left: 14px; gap: 3px; }
    .files { display: flex; align-items: flex-end; gap: 2px; height: 18px; padding: 0 0 2px 12px; background: #3a3a3a; border-bottom: 2px solid #5e5e5e; box-sizing: border-box; }
    .file { height: 14px; width: 83px; justify-content: flex-start; padding-left: 9px; background: linear-gradient(#5e5e5e, #4e4e4e); color: #b8b8b8; border-radius: 8px 8px 0 0; }
    .file.on { background: linear-gradient(#7a7a7a, #5e5e5e); color: #fff; justify-content: space-between; padding: 0 9px 0 6px; }
    .file.on .ic { color: #444; }
    .file.add { width: 15px; padding: 0; justify-content: center; margin-left: 2px; font-size: 11px; }
    .work { display: grid; grid-template-columns: 243px 1fr; }
    .tip { position: absolute; right: 109px; top: 22px; width: 159px; height: 70px; border-radius: 4px; background: linear-gradient(rgba(238, 238, 238, .92), rgba(205, 205, 205, .9)); color: #222; display: flex; gap: 5px; padding: 7px 4px 0 5px; }
    .tip::before { content: ""; position: absolute; right: 10px; top: -7px; border: solid transparent; border-width: 0 7px 7px; border-bottom-color: #dedede; }
    .tip h2 { margin: 0 0 3px; font-size: 8px; line-height: 10px; color: #111; }
    .tip p { margin: 0 0 4px; }
    .tip a { color: #2323c8; }
    .x { position: absolute; right: 4px; top: 2px; width: 9px; height: 9px; border-radius: 50%; background: #666; color: #eee; }
    .more { position: absolute; right: 7px; bottom: 6px; color: #333; }
    .more .car { width: 9px; height: 6px; }
  `];
  render() {
    return html`
      <header class="top">
        <button class="logo" aria-label="Application menu"><svg width="25" height="25" viewBox="0 0 25 25"><path d="M3 18L9 2h5l5 16h-4l-2-5H9.500L7 18z" fill="#c4202a" /><path d="M9.500 10h3L11 5z" fill="#e6dede" /><path d="M3 18L9 2l2 3-4 13z" fill="#8f1820" opacity=".5" /><path d="M20 12h4l-2 2.500z" fill="#222" /><text x="12" y="24" font-size="6" font-weight="900" text-anchor="middle" fill="#111">MEP</text></svg></button>
        <cad-titlebar></cad-titlebar>
        <nav class="menu">${this.menus.map((m) => html`<button class=${classMap({ item: true, on: m === this.active })}>${m}</button>`)}
          <button class="pill" aria-label="Minimize ribbon"><svg width="9" height="6"><rect width="9" height="6" rx="2" fill="#eee" /><path d="M2.500 4l2-2.500 2 2.500z" fill="#444" /></svg>${car}</button></nav>
      </header>
      <cad-ribbon></cad-ribbon>
      <nav class="files"><button class="file">Start</button><button class="file on">Drawing1*${ic("close", 6)}</button><button class="file add" aria-label="New drawing">+</button></nav>
      <main class="work"><cad-properties></cad-properties><cad-viewport></cad-viewport></main>
      <cad-status></cad-status>
      <desk-taskbar></desk-taskbar>
      <aside class="tip">${ic("tipbulb", 14)}
        <div><h2>Use CTRL for sub-selection</h2><p>Press and hold the CTRL key and<br />use the cursor to select a set of<br />subobjects to manipulate.</p><a href="#">Don't show me this again</a></div>
        <button class="x" aria-label="Close">${ic("close", 5)}</button><button class="more" aria-label="More">${car}</button></aside>`;
  }
}
